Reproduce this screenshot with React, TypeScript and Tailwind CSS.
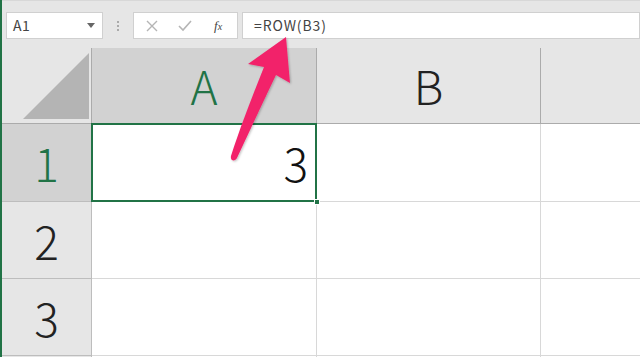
import React from "react";

const HEAD = "font-['Noto_Sans_CJK_JP','Noto_Sans',sans-serif] font-light";

const Arrow = () => (
  <svg className="absolute left-0 top-0 pointer-events-none" width="640" height="357" viewBox="0 0 640 357">
    <defs>
      <filter id="sh" x="-20%" y="-20%" width="140%" height="140%">
        <feDropShadow dx="1" dy="1" stdDeviation="1.2" floodColor="#000" floodOpacity="0.25" />
      </filter>
    </defs>
    <path
      d="M284 37 L288 83 L274 75 C262 100 248 130 235 158 C233 162 228 161 229 156 C238 128 250 97 262 67 L246 64 Z"
      fill="#f2246b"
      filter="url(#sh)"
    />
  </svg>
);

export default function App() {
  return (
    <div className="relative w-[640px] h-[357px] overflow-hidden bg-white border-l-2 border-[#217346] font-['Liberation_Sans',sans-serif]">
      {/* formula bar */}
      <div className="h-[48px] bg-[#e6e6e6] flex items-start pt-[11px] pl-[4px] border-t border-[#d8d8d8]">
        <div className="w-[97px] h-[27px] bg-white border border-[#d0d0d0] flex items-center justify-between pl-[6px] pr-[7px]">
          <span className={`text-[14px] text-[#444] ${HEAD} font-normal tracking-[0.5px]`}>A1</span>
          <svg width="8" height="5" viewBox="0 0 8 5"><path d="M0 0 H8 L4 5 Z" fill="#666" /></svg>
        </div>
        <div className="w-[30px] h-[27px] flex flex-col items-center justify-center gap-[2px]">
          <span className="w-[2px] h-[2px] bg-[#aaa]" />
          <span className="w-[2px] h-[2px] bg-[#aaa]" />
          <span className="w-[2px] h-[2px] bg-[#aaa]" />
        </div>
        <div className="w-[105px] h-[27px] bg-white border border-[#d0d0d0] flex items-center pl-[12px]">
          <svg width="12" height="12" viewBox="0 0 12 12"><path d="M1 1 L11 11 M11 1 L1 11" stroke="#b5b5b5" strokeWidth="1.4" /></svg>
          <svg className="ml-[20px]" width="14" height="12" viewBox="0 0 14 12"><path d="M1 6 L5 10 L13 1" stroke="#b5b5b5" strokeWidth="1.6" fill="none" /></svg>
          <span className="ml-[22px] text-[13px] italic text-[#444] font-['Liberation_Serif',serif]">f<span className="text-[10px]">x</span></span>
        </div>
        <div className="flex-1 ml-[4px] h-[27px] bg-white border border-[#d0d0d0] flex items-center pl-[11px]">
          <span className={`text-[14px] text-[#444] ${HEAD} font-normal tracking-[0.9px]`}>=ROW(B3)</span>
        </div>
      </div>

      {/* grid */}
      <div className="grid grid-cols-[90px_225px_224px_1fr] grid-rows-[76px_78px_77px_77px_1fr] h-[309px]">
        <div className="bg-[#e6e6e6] border-r border-b border-[#ababab] relative">
          <svg className="absolute left-[21px] top-[5px]" width="66" height="66" viewBox="0 0 66 66"><path d="M66 0 V66 H0 Z" fill="#b4b4b4" /></svg>
        </div>
        <div className={`bg-[#d2d2d2] border-r border-b border-[#ababab] flex items-center justify-center text-[46px] text-[#217346] ${HEAD}`}>A</div>
        <div className={`bg-[#e6e6e6] border-r border-b border-[#ababab] flex items-center justify-center text-[46px] text-[#222] ${HEAD}`}>B</div>
        <div className="bg-[#e6e6e6] border-b border-[#ababab]" />

        <div className={`bg-[#d2d2d2] border-r border-b border-[#bdbdbd] flex items-center justify-center text-[46px] text-[#217346] ${HEAD}`}>1</div>
        <div className={`relative border-r border-b border-[#d8d8d8] flex items-center justify-end pr-[8px] text-[46px] text-[#111] ${HEAD}`}>
          3
          <div className="absolute -left-[1px] -top-[1px] -right-[1px] -bottom-[1px] border-2 border-[#217346]" />
          <div className="absolute -right-[4px] -bottom-[4px] w-[6px] h-[6px] bg-[#217346] border border-white" />
        </div>
        <div className="border-r border-b border-[#d8d8d8]" />
        <div className="border-b border-[#d8d8d8]" />

        <div className={`bg-[#e6e6e6] border-r border-b border-[#bdbdbd] flex items-center justify-center text-[46px] text-[#222] ${HEAD}`}>2</div>
        <div className="border-r border-b border-[#d8d8d8]" />
        <div className="border-r border-b border-[#d8d8d8]" />
        <div className="border-b border-[#d8d8d8]" />

        <div className={`bg-[#e6e6e6] border-r border-b border-[#bdbdbd] flex items-center justify-center text-[46px] text-[#222] ${HEAD}`}>3</div>
        <div className="border-r border-b border-[#d8d8d8]" />
        <div className="border-r border-b border-[#d8d8d8]" />
        <div className="border-b border-[#d8d8d8]" />

        <div className="bg-[#e6e6e6] border-r border-[#bdbdbd]" />
        <div className="border-r border-[#d8d8d8]" />
        <div className="border-r border-[#d8d8d8]" />
        <div />
      </div>

      <Arrow />
    </div>
  );
}
